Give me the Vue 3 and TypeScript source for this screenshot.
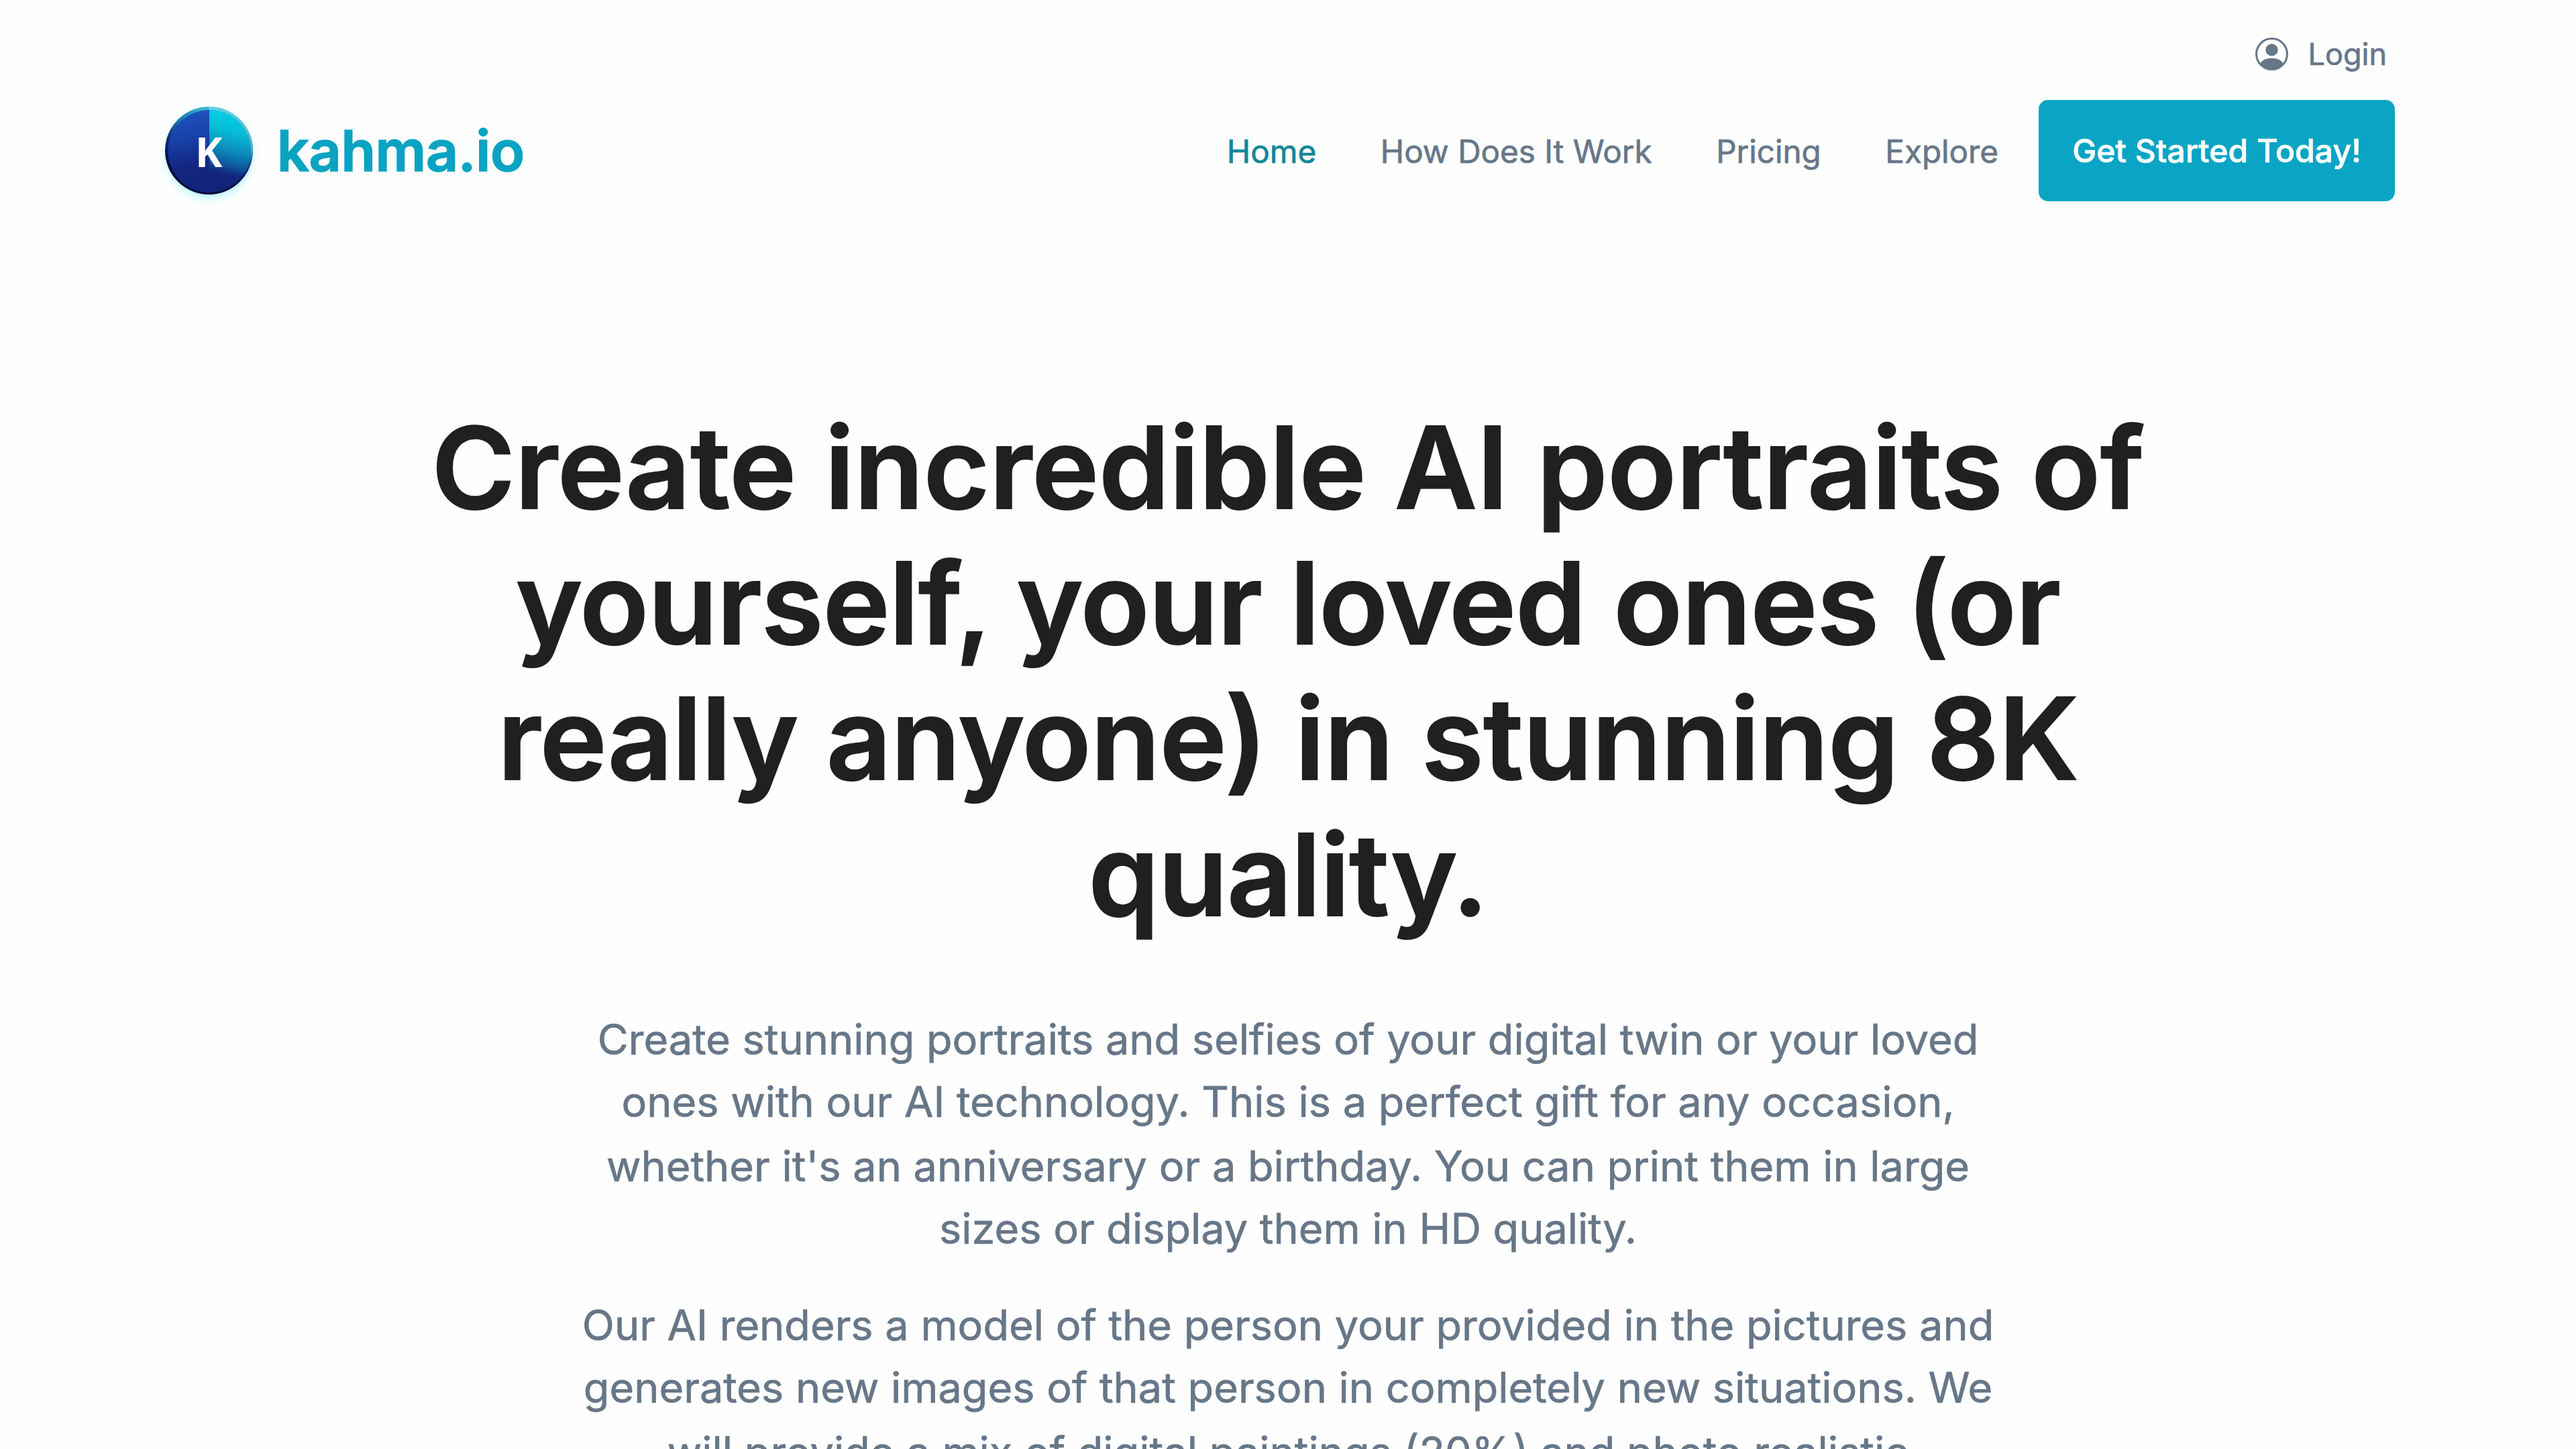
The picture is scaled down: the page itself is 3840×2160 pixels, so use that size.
<script setup lang="ts">
interface NavItem {
  label: string
  active?: boolean
}

const navItems: NavItem[] = [
  { label: 'Home', active: true },
  { label: 'How Does It Work' },
  { label: 'Pricing' },
  { label: 'Explore' },
]

const headline: string[] = [
  'Create incredible AI portraits of',
  'yourself, your loved ones (or',
  'really anyone) in stunning 8K',
  'quality.',
]

const paragraphs: string[][] = [
  [
    'Create stunning portraits and selfies of your digital twin or your loved',
    'ones with our AI technology. This is a perfect gift for any occasion,',
    "whether it's an anniversary or a birthday. You can print them in large",
    'sizes or display them in HD quality.',
  ],
  [
    'Our AI renders a model of the person your provided in the pictures and',
    'generates new images of that person in completely new situations. We',
    'will provide a mix of digital paintings (20%) and photo realistic',
  ],
]
</script>

<template>
  <div class="page">
    <header class="header">
      <div class="topbar">
        <a class="login">
          <svg class="login-icon" viewBox="0 0 16 16" fill="currentColor" aria-hidden="true">
            <path d="M11 6a3 3 0 1 1-6 0 3 3 0 0 1 6 0z" />
            <path
              fill-rule="evenodd"
              d="M0 8a8 8 0 1 1 16 0A8 8 0 0 1 0 8zm8-7a7 7 0 0 0-5.468 11.37C3.242 11.226 4.805 10 8 10s4.757 1.225 5.468 2.37A7 7 0 0 0 8 1z"
            />
          </svg>
          <span>Login</span>
        </a>
      </div>

      <div class="navbar">
        <a class="brand">
          <svg class="brand-mark" viewBox="0 0 170 170" aria-hidden="true">
            <defs>
              <linearGradient id="rim" x1="0.62" y1="0" x2="0.3" y2="1">
                <stop offset="0" stop-color="#4cc4dc" />
                <stop offset="0.22" stop-color="#1e86b8" />
                <stop offset="0.5" stop-color="#0c2c78" />
                <stop offset="0.8" stop-color="#020a3c" />
              </linearGradient>
              <linearGradient id="rimRight" x1="0" y1="0" x2="0" y2="1">
                <stop offset="0" stop-color="#5fd3e2" />
                <stop offset="0.5" stop-color="#4aa9c9" />
                <stop offset="0.8" stop-color="#10246f" stop-opacity="0" />
              </linearGradient>
              <linearGradient id="face" x1="0.4" y1="0" x2="0.5" y2="1">
                <stop offset="0" stop-color="#1c52be" />
                <stop offset="0.3" stop-color="#1843ab" />
                <stop offset="0.65" stop-color="#132780" />
                <stop offset="1" stop-color="#12227a" />
              </linearGradient>
              <linearGradient id="wedge" gradientUnits="userSpaceOnUse" x1="104" y1="20" x2="82" y2="114">
                <stop offset="0" stop-color="#00d0e6" />
                <stop offset="0.28" stop-color="#06bdd6" />
                <stop offset="0.58" stop-color="#0a8cb9" />
                <stop offset="0.82" stop-color="#10539a" />
                <stop offset="1" stop-color="#13277f" stop-opacity="0" />
              </linearGradient>
              <filter id="glow" x="-20%" y="-20%" width="140%" height="140%">
                <feGaussianBlur stdDeviation="6" />
              </filter>
            </defs>
            <circle cx="82" cy="86" r="65" fill="#b9f5fa" filter="url(#glow)" />
            <circle cx="81.5" cy="79.5" r="65.5" fill="url(#rim)" />
            <path d="M81.5 14a65.5 65.5 0 0 1 0 131z" fill="url(#rimRight)" />
            <circle cx="82" cy="80.5" r="61.5" fill="url(#face)" />
            <path d="M82 19a61.5 61.5 0 0 1 0 123z" fill="url(#wedge)" />
            <text class="brand-letter" x="61" y="104">K</text>
          </svg>
          <span class="brand-name">kahma.io</span>
        </a>

        <nav class="nav">
          <a
            v-for="item in navItems"
            :key="item.label"
            class="nav-link"
            :class="{ active: item.active }"
          >{{ item.label }}</a>
          <a class="cta">Get Started Today!</a>
        </nav>
      </div>
    </header>

    <main class="hero">
      <h1 class="title">
        <span v-for="line in headline" :key="line" class="line">{{ line }}</span>
      </h1>
      <p v-for="(lines, i) in paragraphs" :key="i" class="lead">
        <span v-for="line in lines" :key="line" class="line">{{ line }}</span>
      </p>
    </main>
  </div>
</template>

<style>
body {
  margin: 0;
  background: #fefefe;
}
</style>

<style scoped>
.page {
  width: 3840px;
  height: 2160px;
  overflow: hidden;
  background: #fefefe;
  color: #677788;
  font-family: Inter, 'Liberation Sans', sans-serif;
  -webkit-text-stroke: 0.7px currentColor;
}

.header {
  box-sizing: border-box;
  height: 300px;
  padding: 44px 270px 0 230px;
}

.topbar {
  display: flex;
  justify-content: flex-end;
  height: 72px;
  padding-right: 12px;
}

.login {
  display: flex;
  align-items: center;
  gap: 29px;
  height: 72px;
  font-size: 45px;
}

.login-icon {
  width: 49px;
  height: 49px;
}

.navbar {
  display: flex;
  align-items: center;
  justify-content: space-between;
  height: 151px;
  margin-top: 33px;
}

.brand {
  display: flex;
  align-items: center;
}

.brand-mark {
  width: 170px;
  height: 170px;
  margin-top: 10px;
}

.brand-letter {
  fill: #fff;
  font-family: 'Open Sans', 'Noto Sans', sans-serif;
  font-size: 61px;
  font-weight: 700;
}

.brand-name {
  margin: 2px 0 0 13px;
  color: #0aa3c2;
  font-size: 84px;
  font-weight: 600;
  letter-spacing: -0.3px;
  line-height: 1.2;
  -webkit-text-stroke: 1.6px currentColor;
}

.nav {
  display: flex;
  align-items: center;
  gap: 95.6px;
  font-size: 47.6px;
}

.nav-link {
  padding-top: 2px;
  white-space: nowrap;
}

.nav-link.active {
  color: #13869a;
}

.cta {
  box-sizing: border-box;
  width: 531px;
  height: 151px;
  margin-left: -35.6px;
  border-radius: 14px;
  background: #0aa5c4;
  color: #fff;
  font-size: 48.2px;
  font-weight: 500;
  line-height: 152px;
  text-align: center;
  white-space: nowrap;
}

.hero {
  padding-top: 295.5px;
  text-align: center;
}

.line {
  display: block;
  white-space: nowrap;
}

.title {
  margin: 0 0 97px;
  color: #1e2022;
  font-size: 168.7px;
  font-weight: 600;
  line-height: 202.4px;
  -webkit-text-stroke: 2px currentColor;
}

.title .line:nth-child(2) {
  letter-spacing: -0.8px;
}

.title .line:nth-child(3) {
  letter-spacing: -0.45px;
}

.title .line:nth-child(4) {
  letter-spacing: -1px;
}

.lead {
  margin: 0 0 48px;
  font-size: 63px;
  line-height: 94px;
}

.lead .line:nth-child(odd) {
  height: 93px;
}

.lead .line:nth-child(even) {
  height: 96px;
}
</style>
